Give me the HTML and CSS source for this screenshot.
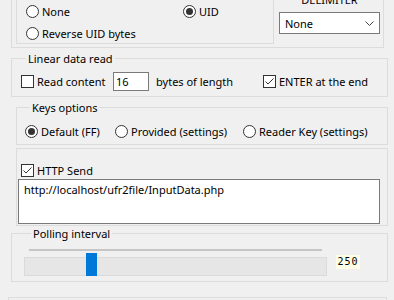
FILE: index.html
```html
<!DOCTYPE html>
<html>
<head>
<meta charset="utf-8">
<link rel="stylesheet" href="styles.css">
</head>
<body>
<div class="top-group">
  <div class="uid-group">
    <label class="opt"><svg class="ico" viewBox="0 0 13 13"><circle cx="6.5" cy="6.5" r="6" fill="#fff" stroke="#333"/></svg><span>None</span></label>
    <label class="opt"><svg class="ico" viewBox="0 0 13 13"><circle cx="6.5" cy="6.5" r="6" fill="#fff" stroke="#333"/><circle cx="6.5" cy="6.5" r="3.5" fill="#333"/></svg><span>UID</span></label>
    <label class="opt"><svg class="ico" viewBox="0 0 13 13"><circle cx="6.5" cy="6.5" r="6" fill="#fff" stroke="#333"/></svg><span>Reverse UID bytes</span></label>
  </div>
  <div class="delim">
    <div class="delim-label">DELIMITER</div>
    <div class="combo"><span>None</span><svg class="chev" viewBox="0 0 9 5"><path d="M0.5 0.5 L4.5 4.5 L8.5 0.5" fill="none" stroke="#444"/></svg></div>
  </div>
</div>

<fieldset class="grp linear">
  <legend>Linear data read</legend>
  <div class="linear-row">
    <label class="opt read"><svg class="ico" viewBox="0 0 13 13"><rect x="0.5" y="0.5" width="12" height="12" fill="#fff" stroke="#333"/></svg><span>Read content</span></label>
    <div class="num">16</div>
    <span class="bytes">bytes of length</span>
    <label class="opt"><svg class="ico" viewBox="0 0 13 13"><rect x="0.5" y="0.5" width="12" height="12" fill="#fff" stroke="#333"/><path d="M2.5 6.5 L5 9 L10.5 3.5" fill="none" stroke="#333"/></svg><span>ENTER at the end</span></label>
  </div>
</fieldset>

<fieldset class="grp keys">
  <legend>Keys options</legend>
  <div class="keys-row">
    <label class="opt k1"><svg class="ico" viewBox="0 0 13 13"><circle cx="6.5" cy="6.5" r="6" fill="#fff" stroke="#333"/><circle cx="6.5" cy="6.5" r="3.5" fill="#333"/></svg><span>Default (FF)</span></label>
    <label class="opt k2"><svg class="ico" viewBox="0 0 13 13"><circle cx="6.5" cy="6.5" r="6" fill="#fff" stroke="#333"/></svg><span>Provided (settings)</span></label>
    <label class="opt"><svg class="ico" viewBox="0 0 13 13"><circle cx="6.5" cy="6.5" r="6" fill="#fff" stroke="#333"/></svg><span>Reader Key (settings)</span></label>
  </div>
</fieldset>

<div class="grp http">
  <label class="opt http-cb"><svg class="ico" viewBox="0 0 13 13"><rect x="0.5" y="0.5" width="12" height="12" fill="#fff" stroke="#333"/><path d="M2.5 6.5 L5 9 L10.5 3.5" fill="none" stroke="#333"/></svg><span>HTTP Send</span></label>
  <div class="url">http://localhost/ufr2file/InputData.php</div>
</div>

<fieldset class="grp polling">
  <legend>Polling interval</legend>
  <div class="poll-row">
    <div class="slider">
      <div class="track"></div>
      <div class="slot"></div>
      <div class="thumb"></div>
    </div>
    <div class="value">250</div>
  </div>
</fieldset>

<div class="grp last"></div>
</body>
</html>
```

FILE: styles.css
```css
html, body {
  margin: 0;
  padding: 0;
  background: #f0f0f0;
}
body {
  font-family: "Noto Sans", "Liberation Sans", sans-serif;
  font-size: 11px;
  line-height: 15px;
  color: #000;
  overflow: hidden;
}
.opt {
  display: flex;
  align-items: center;
  gap: 3px;
  white-space: nowrap;
}
.ico {
  width: 13px;
  height: 13px;
  flex: none;
  display: block;
}

/* top group */
.top-group {
  box-sizing: border-box;
  margin-left: 11px;
  width: 373px;
  height: 48px;
  border: 1px solid #dcdcdc;
  border-top: none;
  display: flex;
  align-items: flex-start;
}
.uid-group {
  box-sizing: border-box;
  margin-left: 4px;
  width: 258px;
  height: 44px;
  border: 1px solid #dcdcdc;
  border-top: none;
  padding-left: 9px;
  display: grid;
  grid-template-columns: 157px auto;
  grid-auto-rows: 22px;
}
.delim {
  margin-left: 5px;
  width: 101px;
  display: flex;
  flex-direction: column;
  align-items: center;
}
.delim-label {
  margin-top: -8px;
  height: 15px;
}
.combo {
  box-sizing: border-box;
  margin-top: 5px;
  width: 101px;
  height: 22px;
  border: 1px solid #7a7a7a;
  background: #fff;
  display: flex;
  align-items: center;
  justify-content: space-between;
  padding: 0 5px 0 5px;
}
.chev {
  width: 9px;
  height: 5px;
  display: block;
}

/* group boxes */
.grp {
  box-sizing: border-box;
  border: 1px solid #dcdcdc;
  margin: 0;
  padding: 0;
  min-width: 0;
}
.grp legend {
  padding: 0 2px;
  height: 15px;
  line-height: 15px;
}
.linear {
  margin: 3px 0 0 11px;
  width: 377px;
  padding: 6px 0 5px 9px;
}
.linear legend { margin-left: 5px; }
.linear-row {
  display: flex;
  align-items: center;
  height: 19px;
}
.read { width: 92px; }
.num {
  box-sizing: border-box;
  width: 36px;
  height: 19px;
  border: 1px solid #7a7a7a;
  background: #fff;
  padding-left: 2px;
  line-height: 17px;
}
.bytes {
  margin-left: 7px;
  width: 107px;
}

.keys {
  margin: 3px 0 0 16px;
  width: 372px;
  padding: 6px 0 3px 8px;
}
.keys legend { margin-left: 5px; }
.keys-row {
  display: flex;
  align-items: center;
  height: 20px;
}
.k1 { width: 90px; }
.k2 { width: 128px; }

.http {
  margin: 3px 0 0 16px;
  width: 372px;
  height: 78px;
  padding: 15px 0 0 1px;
}
.http-cb {
  height: 13px;
  padding-left: 3px;
}
.url {
  box-sizing: border-box;
  margin-top: 2px;
  width: 362px;
  height: 45px;
  border: 1px solid #7a7a7a;
  background: #fff;
  padding: 2px 0 0 5px;
}

.polling {
  margin: 0 0 0 11px;
  width: 377px;
  padding: 8px 0 5px 12px;
}
.polling legend { margin-left: 7px; }
.poll-row {
  display: flex;
  align-items: flex-start;
}
.slider {
  position: relative;
  width: 303px;
}
.track {
  margin: 0 5px;
  height: 2px;
  background: #c6c6c6;
}
.slot {
  box-sizing: border-box;
  margin-top: 6px;
  height: 19px;
  background: #e6e6e6;
  border: 1px solid #dadada;
}
.thumb {
  position: absolute;
  left: 62px;
  top: 4px;
  width: 11px;
  height: 23px;
  background: #0078d7;
}
.value {
  margin: 6px 0 0 9px;
  width: 24px;
  height: 14px;
  background: #fdfde8;
  font-family: "DejaVu Sans Mono", monospace;
  font-size: 10px;
  line-height: 14px;
  letter-spacing: 1px;
  text-align: center;
}

.last {
  margin: 15px 0 0 8px;
  width: 379px;
  height: 20px;
}
```
